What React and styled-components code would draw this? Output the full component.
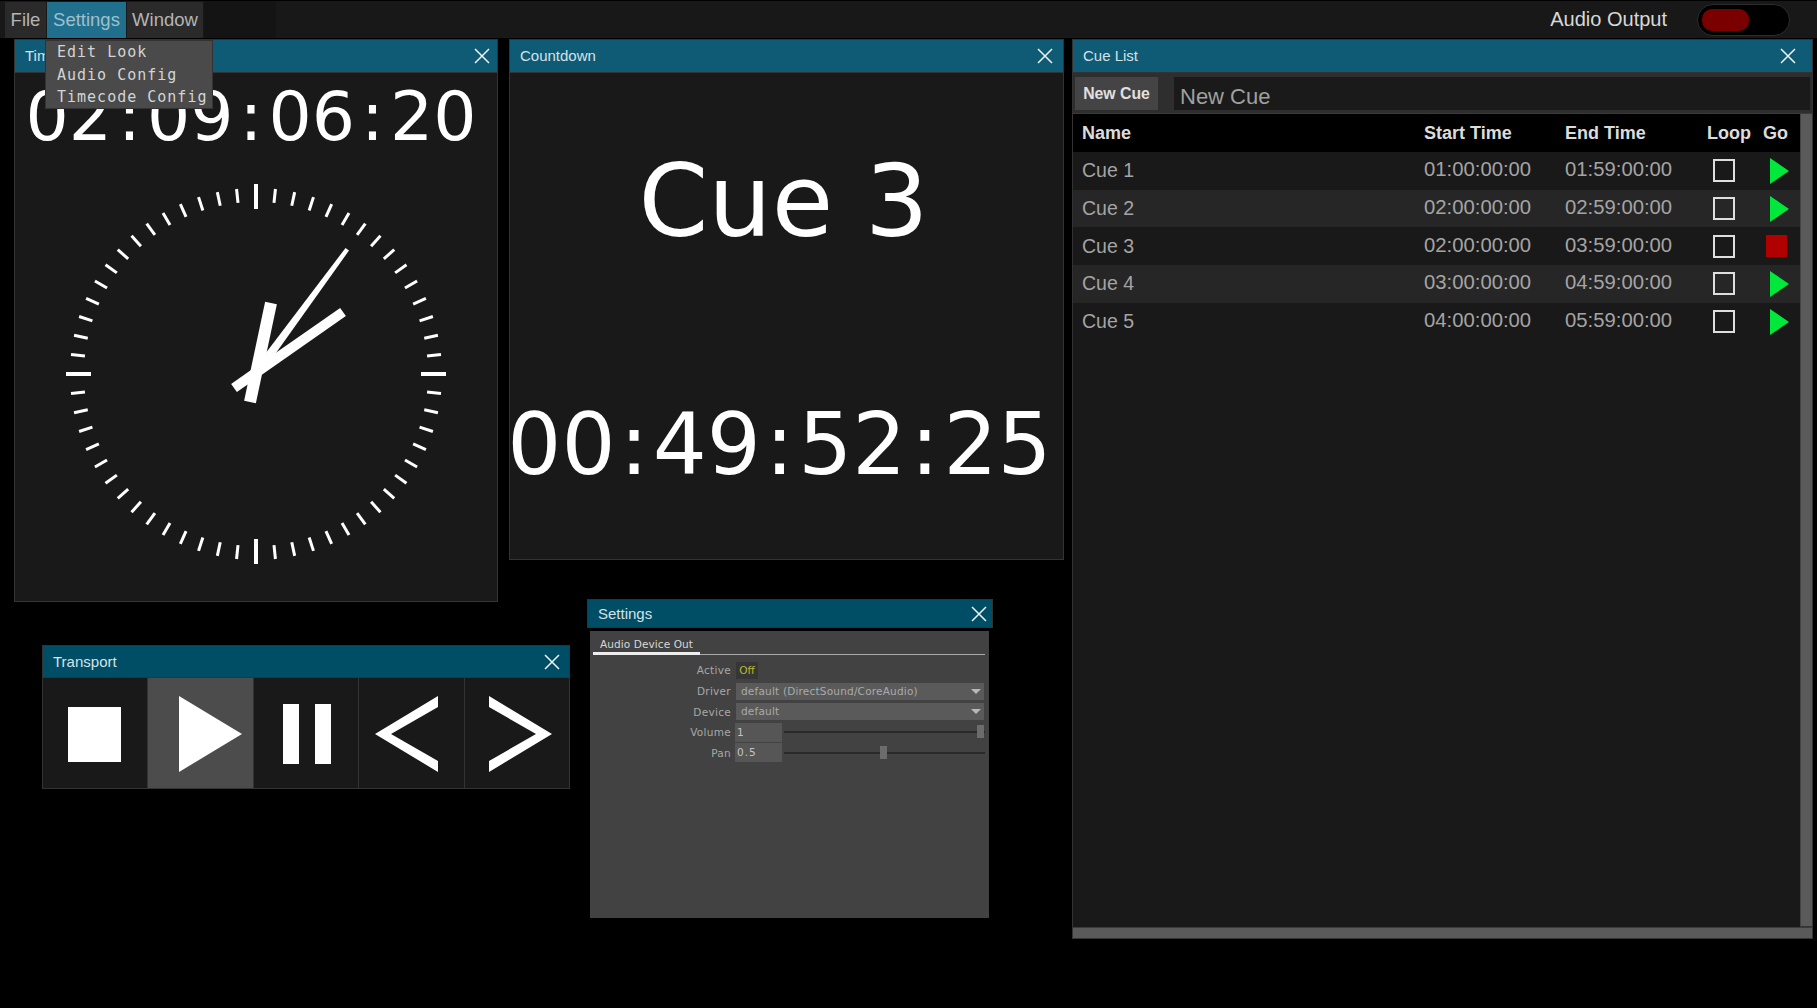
import styled, { createGlobalStyle } from 'styled-components';

const GlobalStyle = createGlobalStyle`
    html, body {
        margin: 0;
        padding: 0;
        background: #000;
        overflow: hidden;
    }
    * {
        box-sizing: border-box;
    }
`;

const CUES = [
    { name: 'Cue 1', start: '01:00:00:00', end: '01:59:00:00' },
    { name: 'Cue 2', start: '02:00:00:00', end: '02:59:00:00' },
    { name: 'Cue 3', start: '02:00:00:00', end: '03:59:00:00', playing: true },
    { name: 'Cue 4', start: '03:00:00:00', end: '04:59:00:00' },
    { name: 'Cue 5', start: '04:00:00:00', end: '05:59:00:00' },
];

const CloseIcon = () => (
    <svg width="16" height="16" viewBox="0 0 16 16">
        <path d="M1 1 L15 15 M15 1 L1 15" stroke="#eef4f6" strokeWidth="1.5" fill="none" />
    </svg>
);

const Window = ({ title, inactive, left, top, width, height, closeGap = 7, children }) => (
    <WindowFrame $left={left} $top={top} $width={width} $height={height}>
        <TitleBar $inactive={inactive} $closeGap={closeGap}>
            <span>{title}</span>
            <CloseIcon />
        </TitleBar>
        {children}
    </WindowFrame>
);

// the big timecodes have colons wider than the font's own
const Timecode = ({ value, pad }) =>
    value.split(':').map((part, i) => (
        <span key={i}>
            {i > 0 && <Colon $pad={pad}>:</Colon>}
            {part}
        </span>
    ));

const ClockFace = () => {
    const ticks = [];
    for (let i = 0; i < 60; i++) {
        const major = i % 15 === 0;
        ticks.push(
            <line
                key={i}
                x1="200"
                x2="200"
                y1={major ? 10 : 14}
                y2={major ? 35 : 28}
                stroke="#fff"
                strokeWidth={major ? 4 : 3}
                transform={`rotate(${i * 6} 200 200)`}
            />
        );
    }
    return (
        <svg width="400" height="400" viewBox="0 0 400 400">
            {ticks}
            <line x1="194" y1="228" x2="215" y2="129" stroke="#fff" strokeWidth="12" />
            <line x1="178" y1="214" x2="287" y2="138" stroke="#fff" strokeWidth="10" />
            <polygon points="289.5,74 293,76.5 210,193 203,188" fill="#fff" />
        </svg>
    );
};

const TransportIcon = ({ points, children }) => (
    <TransportSvg width="105" height="109" viewBox="0 0 105 109" fill="#fff">
        {points && <polygon points={points} />}
        {children}
    </TransportSvg>
);

const App = () => {
    return (
        <Desktop>
            <GlobalStyle />
            <MenuBar>
                <MenuGroup>
                    <MenuItem $width={42}>File</MenuItem>
                    <MenuItem $width={80} $open>
                        Settings
                    </MenuItem>
                    <MenuItem $width={77}>Window</MenuItem>
                </MenuGroup>
                <MenuFiller />
                <AudioOutput>
                    <span>Audio Output</span>
                    <Toggle>
                        <ToggleKnob />
                    </Toggle>
                </AudioOutput>
            </MenuBar>

            <Window title="Time" left={14} top={39} width={484} height={563}>
                <TimeBody>
                    <TimeText>
                        <Timecode value="02:09:06:20" pad={6} />
                    </TimeText>
                    <ClockFace />
                </TimeBody>
            </Window>

            <Window title="Countdown" left={509} top={39} width={555} height={521} closeGap={10}>
                <CountdownBody>
                    <CueName>Cue 3</CueName>
                    <CountdownText>
                        <Timecode value="00:49:52:25" pad={4.3} />
                    </CountdownText>
                </CountdownBody>
            </Window>

            <Window title="Transport" inactive left={42} top={645} width={528} height={144} closeGap={9}>
                <TransportRow>
                    <TransportButton>
                        <TransportIcon>
                            <rect x="25" y="28" width="53" height="55" />
                        </TransportIcon>
                    </TransportButton>
                    <TransportButton $active>
                        <TransportIcon points="31,17 94,55 31,93" />
                    </TransportButton>
                    <TransportButton>
                        <TransportIcon>
                            <rect x="29" y="25" width="16" height="60" />
                            <rect x="61" y="25" width="16" height="60" />
                        </TransportIcon>
                    </TransportButton>
                    <TransportButton>
                        <TransportIcon points="16,55 79,17 79,28 32,55 79,82 79,93" />
                    </TransportButton>
                    <TransportButton>
                        <TransportIcon points="88,55 25,17 25,28 72,55 25,82 25,93" />
                    </TransportButton>
                </TransportRow>
            </Window>

            <SettingsTitle>
                <span>Settings</span>
                <CloseIcon />
            </SettingsTitle>
            <SettingsBody>
                <TabBar>
                    <Tab>Audio Device Out</Tab>
                </TabBar>
                <FormRow>
                    <FormLabel>Active</FormLabel>
                    <OffValue>Off</OffValue>
                </FormRow>
                <FormRow>
                    <FormLabel>Driver</FormLabel>
                    <SelectBox>
                        default (DirectSound/CoreAudio)
                        <SelectArrow />
                    </SelectBox>
                </FormRow>
                <FormRow>
                    <FormLabel>Device</FormLabel>
                    <SelectBox>
                        default
                        <SelectArrow />
                    </SelectBox>
                </FormRow>
                <FormRow $tall>
                    <FormLabel>Volume</FormLabel>
                    <NumberBox>1</NumberBox>
                    <SliderTrack>
                        <SliderThumb style={{ left: '96%' }} />
                    </SliderTrack>
                </FormRow>
                <FormRow $tall>
                    <FormLabel>Pan</FormLabel>
                    <NumberBox>0.5</NumberBox>
                    <SliderTrack>
                        <SliderThumb style={{ left: '48%' }} />
                    </SliderTrack>
                </FormRow>
            </SettingsBody>

            <Window title="Cue List" left={1072} top={39} width={741} height={900} closeGap={16}>
                <NewCueRow>
                    <NewCueButton>New Cue</NewCueButton>
                    <NewCueInput>New Cue</NewCueInput>
                </NewCueRow>
                <CueArea>
                    <CueTable>
                        <HeaderRow>
                            <span>Name</span>
                            <span>Start Time</span>
                            <span>End Time</span>
                            <span>Loop</span>
                            <span>Go</span>
                        </HeaderRow>
                        {CUES.map((cue, i) => (
                            <CueRow key={cue.name} $odd={i % 2 === 1}>
                                <CueLabel>{cue.name}</CueLabel>
                                <CueTime>{cue.start}</CueTime>
                                <CueTime>{cue.end}</CueTime>
                                <LoopBox />
                                {cue.playing ? (
                                    <StopSquare />
                                ) : (
                                    <GoIcon width="20" height="26" viewBox="0 0 20 26">
                                        <polygon points="1,0 20,13 1,26" fill="#00e83c" />
                                    </GoIcon>
                                )}
                            </CueRow>
                        ))}
                    </CueTable>
                    <VerticalScroll />
                </CueArea>
                <HorizontalScroll />
            </Window>

            <DropMenu>
                <DropItem>Edit Look</DropItem>
                <DropItem>Audio Config</DropItem>
                <DropItem>Timecode Config</DropItem>
            </DropMenu>
        </Desktop>
    );
};

export default App;

const Desktop = styled.div`
    position: relative;
    width: 1817px;
    height: 1008px;
    background: #000;
    overflow: hidden;
    font-family: 'Liberation Sans', Arial, sans-serif;
`;

const MenuBar = styled.div`
    display: flex;
    align-items: stretch;
    height: 37px;
    margin-top: 1px;
    background: #181818;
`;

const MenuGroup = styled.div`
    display: flex;
    margin-left: 5px;
    padding-top: 1px;
`;

const MenuItem = styled.div`
    display: flex;
    align-items: center;
    justify-content: center;
    width: ${({ $width }) => $width}px;
    font-size: 18.5px;
    color: ${({ $open }) => ($open ? '#9fc0cc' : '#b4b4b4')};
    background: ${({ $open }) => ($open ? '#1f6f8d' : '#2a2a2a')};
    border-right: 1px solid #181818;
`;

const MenuFiller = styled.div`
    width: 72px;
    background: #141414;
`;

const AudioOutput = styled.div`
    margin-left: auto;
    display: flex;
    align-items: center;
    gap: 30px;
    padding-right: 27px;
    color: #d8d8d8;
    font-size: 20px;
`;

const Toggle = styled.div`
    width: 93px;
    height: 32px;
    border-radius: 16px;
    background: #000;
    border: 1px solid #2c2c2c;
    padding: 4px;
`;

const ToggleKnob = styled.div`
    width: 47px;
    height: 22px;
    border-radius: 10px;
    background: #7a0000;
`;

const WindowFrame = styled.div`
    position: absolute;
    left: ${({ $left }) => $left}px;
    top: ${({ $top }) => $top}px;
    width: ${({ $width }) => $width}px;
    height: ${({ $height }) => $height}px;
    display: flex;
    flex-direction: column;
    background: #191919;
    border: 1px solid #333;
`;

const TitleBar = styled.div`
    flex: none;
    height: ${({ $inactive }) => ($inactive ? '32px' : '33px')};
    display: flex;
    align-items: center;
    justify-content: space-between;
    padding: 0 ${({ $closeGap }) => $closeGap}px ${({ $inactive }) => ($inactive ? '0' : '1px')} 10px;
    background: ${({ $inactive }) => ($inactive ? '#004d66' : '#0f5a75')};
    border-bottom: 1px solid #333;
    color: #d4e2e8;
    font-size: 15px;
`;

const SettingsTitle = styled.div`
    position: absolute;
    left: 587px;
    top: 599px;
    width: 406px;
    height: 29px;
    display: flex;
    align-items: center;
    justify-content: space-between;
    padding: 0 5px 0 10px;
    background: #004d66;
    border: 1px solid #333;
    color: #d4e2e8;
    font-size: 15px;
`;

const DropMenu = styled.div`
    position: absolute;
    left: 45px;
    top: 40px;
    width: 168px;
    height: 69px;
    padding: 0 0 0 11px;
    background: #4a4a4a;
    border: 1px solid #333;
`;

const DropItem = styled.div`
    height: 22.5px;
    line-height: 22px;
    font-family: 'DejaVu Sans Mono', monospace;
    font-size: 15px;
    letter-spacing: 1px;
    color: #d4d4d4;
    white-space: nowrap;
`;

const Colon = styled.span`
    padding: 0 ${({ $pad }) => $pad}px;
`;

const TimeBody = styled.div`
    display: flex;
    flex-direction: column;
    align-items: center;
`;

const TimeText = styled.div`
    height: 101px;
    line-height: 87px;
    margin-right: 10px;
    font-family: 'DejaVu Sans', sans-serif;
    font-size: 68px;
    color: #fff;
    white-space: nowrap;
`;

const CountdownBody = styled.div`
    display: flex;
    flex-direction: column;
    align-items: center;
    padding-right: 10px;
    font-family: 'DejaVu Sans', sans-serif;
    color: #fff;
    white-space: nowrap;
`;

const CueName = styled.div`
    margin: 49px 0 0 4px;
    height: 160px;
    line-height: 160px;
    font-size: 100px;
`;

const CountdownText = styled.div`
    margin: 103px 4px 0 0;
    height: 120px;
    line-height: 120px;
    font-size: 85px;
`;

const TransportRow = styled.div`
    flex: 1;
    display: flex;
`;

const TransportButton = styled.div`
    flex: 1;
    min-width: 0;
    display: flex;
    align-items: center;
    justify-content: center;
    background: ${({ $active }) => ($active ? '#4c4c4c' : '#191919')};
    border-right: 1px solid #333;
    &:last-child {
        border-right: none;
    }
`;

const TransportSvg = styled.svg`
    flex: none;
`;

const SettingsBody = styled.div`
    position: absolute;
    left: 590px;
    top: 631px;
    width: 399px;
    height: 287px;
    padding: 6px 4px 0 3px;
    background: #424242;
    font-family: 'DejaVu Sans', sans-serif;
    font-size: 10.5px;
    color: #a8a8a8;
`;

const TabBar = styled.div`
    display: flex;
    height: 18px;
    border-bottom: 1px solid #aaa;
    margin-bottom: 5px;
`;

const Tab = styled.div`
    width: 107px;
    height: 18px;
    padding: 1px 0 0 7px;
    color: #d8d8d8;
    letter-spacing: 0.1px;
    border-bottom: 3px solid #eee;
`;

const FormRow = styled.div`
    display: flex;
    align-items: center;
    height: ${({ $tall }) => ($tall ? '20.5px' : '20.7px')};
`;

const FormLabel = styled.div`
    width: 141px;
    padding-right: 3px;
    text-align: right;
    flex: none;
    letter-spacing: 0.3px;
`;

const OffValue = styled.div`
    margin-left: 2px;
    width: 22px;
    height: 17px;
    line-height: 17px;
    text-align: center;
    background: #363636;
    color: #b9b634;
`;

const SelectBox = styled.div`
    position: relative;
    margin-left: 2px;
    width: 248px;
    height: 17px;
    line-height: 17px;
    padding-left: 5px;
    background: #5a5a5a;
    color: #aaa;
    letter-spacing: 0.2px;
`;

const SelectArrow = styled.div`
    position: absolute;
    right: 3px;
    top: 6px;
    width: 0;
    height: 0;
    border-left: 5px solid transparent;
    border-right: 5px solid transparent;
    border-top: 5px solid #b8b8b8;
`;

const NumberBox = styled.div`
    width: 47px;
    height: 19px;
    line-height: 19px;
    padding-left: 2px;
    margin-left: 1px;
    background: #565656;
    color: #c4c4c4;
    letter-spacing: 1px;
`;

const SliderTrack = styled.div`
    position: relative;
    margin-left: 2px;
    width: 202px;
    height: 2px;
    background: #2a2a2a;
`;

const SliderThumb = styled.div`
    position: absolute;
    top: -6px;
    width: 7px;
    height: 13px;
    background: #6c6c6c;
`;

const NewCueRow = styled.div`
    flex: none;
    display: flex;
    gap: 16px;
    height: 41px;
    padding: 4px 2px 3px 2px;
    background: #2e2e2e;
    border-bottom: 1px solid #3a3a3a;
`;

const NewCueButton = styled.div`
    width: 83px;
    height: 33px;
    display: flex;
    align-items: center;
    justify-content: center;
    background: #444;
    color: #e0e0e0;
    font-size: 15.8px;
    font-weight: bold;
`;

const NewCueInput = styled.div`
    flex: 1;
    height: 33px;
    line-height: 39px;
    padding-left: 6px;
    background: #1a1a1a;
    color: #a0a0a0;
    font-size: 22px;
`;

const CueArea = styled.div`
    flex: 1;
    display: flex;
    min-height: 0;
`;

const CueTable = styled.div`
    flex: 1;
    min-width: 0;
`;

const COLUMNS = '351px 141px 142px 56px 37px';

const HeaderRow = styled.div`
    display: grid;
    grid-template-columns: ${COLUMNS};
    align-items: center;
    height: 38px;
    background: #000;
    color: #dcdcdc;
    font-size: 18px;
    font-weight: bold;
    & > span:first-child {
        padding-left: 9px;
    }
`;

const CueRow = styled.div`
    display: grid;
    grid-template-columns: ${COLUMNS};
    align-items: center;
    height: 37.7px;
    background: ${({ $odd }) => ($odd ? '#262626' : '#191919')};
    color: #a4a4a4;
    font-size: 19.5px;
`;

const CueLabel = styled.span`
    padding-left: 9px;
`;

const CueTime = styled.span`
    font-size: 20.3px;
    position: relative;
    top: -1px;
`;

const LoopBox = styled.div`
    width: 22px;
    height: 23px;
    margin-left: 6px;
    border: 2px solid #dedede;
`;

const GoIcon = styled.svg`
    margin-left: 6px;
`;

const StopSquare = styled.div`
    width: 21px;
    height: 22px;
    margin-left: 3px;
    background: #b00000;
`;

const VerticalScroll = styled.div`
    flex: none;
    width: 12px;
    background: #5a5a5a;
    border-left: 1px solid #444;
    border-bottom: 1px solid #333;
`;

const HorizontalScroll = styled.div`
    flex: none;
    height: 11px;
    background: #5a5a5a;
    border-top: 1px solid #3a3a3a;
`;
